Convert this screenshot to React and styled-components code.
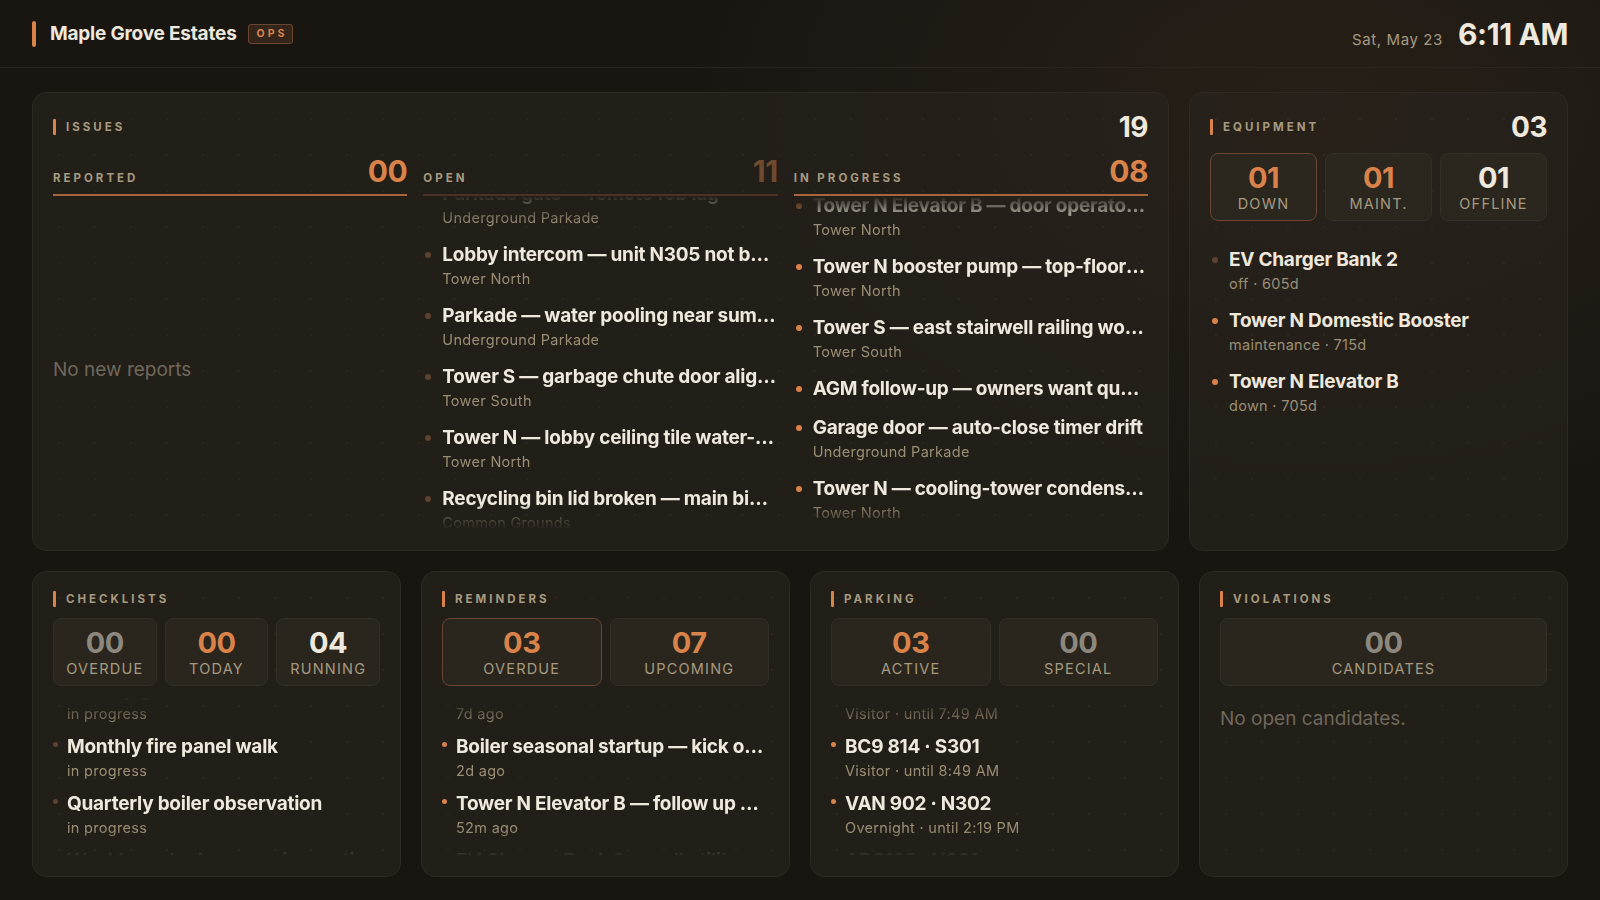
import React, { useLayoutEffect, useRef } from 'react';
import styled, { createGlobalStyle } from 'styled-components';

const C = {
  bg: '#191612',
  panel: 'rgba(40, 36, 29, 0.62)',
  border: '#2e2921',
  box: 'rgba(46, 41, 33, 0.7)',
  boxBorder: '#362f26',
  orange: '#d9834b',
  orangeDim: '#6a4730',
  text: '#efe8dc',
  label: '#a69a80',
  sub: '#9a8e75',
  dim: '#6f685c',
  gray: '#8d887e',
};

const GlobalStyle = createGlobalStyle`
  html, body, #root { height: 100%; }
  body {
    margin: 0;
    background: ${C.bg};
    color: ${C.text};
    font-family: Inter, "Noto Sans", sans-serif;
    -webkit-font-smoothing: antialiased;
  }
`;

const Page = styled.div`
  height: 100vh;
  display: flex;
  flex-direction: column;
  background:
    radial-gradient(ellipse 900px 600px at 82% 12%, rgba(74, 56, 38, 0.28), transparent 70%),
    ${C.bg};
`;

const Header = styled.header`
  flex: 0 0 68px;
  box-sizing: border-box;
  display: flex;
  align-items: center;
  justify-content: space-between;
  padding: 0 32px;
  border-bottom: 1px solid #2a251e;
`;

const Brand = styled.div`
  display: flex;
  align-items: center;
  gap: 14px;
`;

const BrandBar = styled.span`
  width: 4px;
  height: 26px;
  border-radius: 2px;
  background: ${C.orange};
`;

const BrandName = styled.h1`
  margin: 0;
  font-size: 19px;
  font-weight: 700;
  letter-spacing: -0.2px;
  color: ${C.text};
`;

const Badge = styled.span`
  margin-left: -3px;
  padding: 2px 5px 2px 8px;
  font-size: 10.5px;
  line-height: 14px;
  font-weight: 700;
  letter-spacing: 3px;
  color: ${C.orange};
  background: #34251a;
  border: 1px solid ${C.orangeDim};
  border-radius: 3px;
`;

const Clock = styled.div`
  display: flex;
  align-items: baseline;
  gap: 15px;
`;

const DateText = styled.span`
  font-size: 15px;
  letter-spacing: 0.6px;
  color: ${C.label};
`;

const TimeText = styled.span`
  font-size: 30px;
  font-weight: 700;
  letter-spacing: -0.4px;
  color: ${C.text};
`;

const Main = styled.main`
  flex: 1;
  min-height: 0;
  display: grid;
  grid-template-rows: 3fr 2fr;
  gap: 20px;
  padding: 24px 32px 23px;
`;

const TopRow = styled.div`
  display: grid;
  grid-template-columns: 3fr 1fr;
  gap: 20px;
  min-height: 0;
`;

const BottomRow = styled.div`
  display: grid;
  grid-template-columns: repeat(4, 1fr);
  gap: 20px;
  min-height: 0;
`;

const Panel = styled.section`
  display: flex;
  flex-direction: column;
  min-height: 0;
  padding: 20px;
  border-radius: 14px;
  border: 1px solid ${C.border};
  background-color: ${C.panel};
  background-image: radial-gradient(rgba(255, 240, 220, 0.035) 1px, transparent 1.4px);
  background-size: 36px 36px;
  background-position: 8px 8px;
  overflow: hidden;
`;

const PanelHead = styled.div`
  display: flex;
  align-items: center;
  justify-content: space-between;
  height: ${(p) => (p.$tall ? 28 : 14)}px;
  margin-bottom: 12px;
`;

const PanelLabel = styled.div`
  display: flex;
  align-items: center;
  gap: 10px;
  font-size: 11.5px;
  font-weight: 700;
  letter-spacing: 3px;
  color: ${C.label};

  &::before {
    content: '';
    width: 3px;
    height: 16px;
    border-radius: 1px;
    background: ${C.orange};
  }
`;

const PanelTotal = styled.span`
  font-size: 28px;
  line-height: 28px;
  font-weight: 700;
  letter-spacing: -0.5px;
  color: ${C.text};
`;

const IssueColumns = styled.div`
  flex: 1;
  min-height: 0;
  display: grid;
  grid-template-columns: repeat(3, 1fr);
  gap: 16px;
`;

const Column = styled.div`
  display: flex;
  flex-direction: column;
  min-height: 0;
`;

const ColumnHead = styled.div`
  display: flex;
  align-items: baseline;
  justify-content: space-between;
  padding-bottom: 5px;
  border-bottom: 2px solid ${(p) => (p.$active ? '#a8643a' : '#4a3225')};
`;

const ColumnLabel = styled.span`
  font-size: 11.5px;
  font-weight: 700;
  letter-spacing: 3px;
  color: ${C.label};
`;

const ColumnCount = styled.span`
  font-size: 30px;
  line-height: 36px;
  font-weight: 700;
  letter-spacing: -0.5px;
  color: ${(p) => p.$color};
`;

const ListViewport = styled.div`
  flex: 1;
  min-height: 0;
  margin-top: ${(p) => p.$top || 0}px;
  overflow: hidden;
  mask-image: ${(p) =>
    p.$plain
      ? 'none'
      : 'linear-gradient(to bottom, transparent 0, #000 28px, #000 calc(100% - 26px), transparent 100%)'};
`;

const ItemList = styled.ul`
  list-style: none;
  margin: 0;
  padding: 0 0 40px ${(p) => (p.$compact ? 0 : 2)}px;
  display: flex;
  flex-direction: column;
  gap: ${(p) => (p.$compact ? 9 : 13)}px;
`;

const Item = styled.li`
  display: grid;
  grid-template-columns: ${(p) => (p.$compact ? '5px' : '6px')} minmax(0, 1fr);
  column-gap: ${(p) => (p.$compact ? 9 : 11)}px;
`;

const Bullet = styled.span`
  width: 100%;
  aspect-ratio: 1;
  margin-top: ${(p) => (p.$compact ? 8 : 10)}px;
  border-radius: 50%;
  background: ${(p) => (p.$hot ? C.orange : '#5e4230')};
`;

const ItemBody = styled.div`
  min-width: 0;
`;

const ItemTitle = styled.div`
  font-size: 19px;
  line-height: 26px;
  font-weight: 700;
  letter-spacing: -0.25px;
  color: ${C.text};
  white-space: nowrap;
  overflow: hidden;
  text-overflow: ellipsis;
`;

const ItemSub = styled.div`
  font-size: 14.5px;
  line-height: 22px;
  letter-spacing: 0.3px;
  color: ${C.sub};
  white-space: nowrap;
  overflow: hidden;
  text-overflow: ellipsis;
`;

const EmptyArea = styled.div`
  flex: 1;
  display: flex;
  align-items: center;
  padding-top: 12px;
`;

const EmptyNote = styled.p`
  margin: ${(p) => (p.$top ? `${p.$top}px 0 0` : 0)};
  font-size: 19px;
  color: ${C.dim};
`;

const StatRow = styled.div`
  display: grid;
  grid-template-columns: repeat(${(p) => p.$count}, 1fr);
  gap: 8px;
`;

const StatBox = styled.div`
  height: 68px;
  box-sizing: border-box;
  display: flex;
  flex-direction: column;
  align-items: center;
  justify-content: center;
  padding-top: 2px;
  border-radius: 8px;
  background: ${C.box};
  border: 1px solid ${(p) => (p.$active ? C.orangeDim : C.boxBorder)};
`;

const StatNum = styled.span`
  font-size: 29px;
  line-height: 32px;
  font-weight: 700;
  letter-spacing: -0.5px;
  color: ${(p) => p.$color};
`;

const StatLabel = styled.span`
  font-size: 14.5px;
  line-height: 20px;
  letter-spacing: 1.2px;
  text-transform: uppercase;
  color: ${C.label};
`;

function ScrollList({ offset = 0, top, items, hot, plain, compact }) {
  const ref = useRef(null);
  useLayoutEffect(() => {
    if (ref.current) ref.current.scrollTop = offset;
  }, [offset]);
  return (
    <ListViewport ref={ref} $top={top} $plain={plain}>
      <ItemList $compact={compact}>
        {items.map((it, i) => (
          <Item key={i} $compact={compact}>
            <Bullet $hot={it.hot ?? hot} $compact={compact} />
            <ItemBody>
              <ItemTitle>{it.title}</ItemTitle>
              {it.sub && <ItemSub>{it.sub}</ItemSub>}
            </ItemBody>
          </Item>
        ))}
      </ItemList>
    </ListViewport>
  );
}

function Stats({ stats }) {
  return (
    <StatRow $count={stats.length}>
      {stats.map((s) => (
        <StatBox key={s.label} $active={s.active}>
          <StatNum $color={s.color}>{s.value}</StatNum>
          <StatLabel>{s.label}</StatLabel>
        </StatBox>
      ))}
    </StatRow>
  );
}

const openIssues = [
  { title: 'Lobby door closer — slams shut', sub: 'Tower South' },
  { title: 'Parkade gate — remote fob lag', sub: 'Underground Parkade' },
  { title: 'Lobby intercom — unit N305 not buzzing', sub: 'Tower North' },
  { title: 'Parkade — water pooling near sump pit', sub: 'Underground Parkade' },
  { title: 'Tower S — garbage chute door alignment', sub: 'Tower South' },
  { title: 'Tower N — lobby ceiling tile water-stained', sub: 'Tower North' },
  { title: 'Recycling bin lid broken — main bin room', sub: 'Common Grounds' },
  { title: 'Tower S — hallway light flicker, 7th floor', sub: 'Tower South' },
  { title: 'Gym treadmill belt slipping', sub: 'Amenity Level' },
  { title: 'Visitor parking sign faded', sub: 'Underground Parkade' },
  { title: 'Tower N — mailroom lock sticking', sub: 'Tower North' },
];

const progressIssues = [
  { title: 'Tower S — boiler room exhaust fan noisy', sub: 'Tower South' },
  { title: 'Roof access hatch — seal worn', sub: 'Tower North' },
  { title: 'Tower N Elevator B — door operator fault', sub: 'Tower North' },
  { title: 'Tower N booster pump — top-floor pressure low', sub: 'Tower North' },
  { title: 'Tower S — east stairwell railing wobbly', sub: 'Tower South' },
  { title: 'AGM follow-up — owners want quotes on paving' },
  { title: 'Garage door — auto-close timer drift', sub: 'Underground Parkade' },
  { title: 'Tower N — cooling-tower condensate leak', sub: 'Tower North' },
];

const equipment = [
  { title: 'EV Charger Bank 2', sub: 'off · 605d', hot: false },
  { title: 'Tower N Domestic Booster', sub: 'maintenance · 715d', hot: true },
  { title: 'Tower N Elevator B', sub: 'down · 705d', hot: true },
];

const checklists = [
  { title: 'Weekly generator test run', sub: 'in progress' },
  { title: 'Monthly fire panel walk', sub: 'in progress' },
  { title: 'Quarterly boiler observation', sub: 'in progress' },
  { title: 'Weekly parkade sweep inspection', sub: 'in progress' },
];

const reminders = [
  { title: 'Insurance renewal — send unit list', sub: '7d ago' },
  { title: 'Boiler seasonal startup — kick off with contractor', sub: '2d ago' },
  { title: 'Tower N Elevator B — follow up with technician', sub: '52m ago' },
  { title: 'EV Charger Bank 2 — call utility about outage', sub: '3h ago' },
];

const parking = [
  { title: 'ABC 123 · S204', sub: 'Visitor · until 7:49 AM' },
  { title: 'BC9 814 · S301', sub: 'Visitor · until 8:49 AM' },
  { title: 'VAN 902 · N302', sub: 'Overnight · until 2:19 PM' },
  { title: 'ABC123 · N301', sub: 'Visitor · until 3:05 PM' },
];

export default function App() {
  return (
    <Page>
      <GlobalStyle />
      <Header>
        <Brand>
          <BrandBar />
          <BrandName>Maple Grove Estates</BrandName>
          <Badge>OPS</Badge>
        </Brand>
        <Clock>
          <DateText>Sat, May 23</DateText>
          <TimeText>6:11 AM</TimeText>
        </Clock>
      </Header>

      <Main>
        <TopRow>
          <Panel>
            <PanelHead $tall>
              <PanelLabel>ISSUES</PanelLabel>
              <PanelTotal>19</PanelTotal>
            </PanelHead>
            <IssueColumns>
              <Column>
                <ColumnHead $active>
                  <ColumnLabel>REPORTED</ColumnLabel>
                  <ColumnCount $color={C.orange}>00</ColumnCount>
                </ColumnHead>
                <EmptyArea>
                  <EmptyNote>No new reports</EmptyNote>
                </EmptyArea>
              </Column>
              <Column>
                <ColumnHead>
                  <ColumnLabel>OPEN</ColumnLabel>
                  <ColumnCount $color="#6e4a30">11</ColumnCount>
                </ColumnHead>
                <ScrollList items={openIssues} offset={76} hot={false} />
              </Column>
              <Column>
                <ColumnHead $active>
                  <ColumnLabel>IN PROGRESS</ColumnLabel>
                  <ColumnCount $color={C.orange}>08</ColumnCount>
                </ColumnHead>
                <ScrollList items={progressIssues} offset={125} hot />
              </Column>
            </IssueColumns>
          </Panel>

          <Panel>
            <PanelHead $tall>
              <PanelLabel>EQUIPMENT</PanelLabel>
              <PanelTotal>03</PanelTotal>
            </PanelHead>
            <Stats
              stats={[
                { value: '01', label: 'Down', color: C.orange, active: true },
                { value: '01', label: 'Maint.', color: C.orange },
                { value: '01', label: 'Offline', color: C.text },
              ]}
            />
            <ScrollList items={equipment} top={26} plain />
          </Panel>
        </TopRow>

        <BottomRow>
          <Panel>
            <PanelHead>
              <PanelLabel>CHECKLISTS</PanelLabel>
            </PanelHead>
            <Stats
              stats={[
                { value: '00', label: 'Overdue', color: C.gray },
                { value: '00', label: 'Today', color: C.orange },
                { value: '04', label: 'Running', color: C.text },
              ]}
            />
            <ScrollList items={checklists} top={12} offset={21} compact hot={false} />
          </Panel>

          <Panel>
            <PanelHead>
              <PanelLabel>REMINDERS</PanelLabel>
            </PanelHead>
            <Stats
              stats={[
                { value: '03', label: 'Overdue', color: C.orange, active: true },
                { value: '07', label: 'Upcoming', color: C.orange },
              ]}
            />
            <ScrollList items={reminders} top={12} offset={21} compact hot />
          </Panel>

          <Panel>
            <PanelHead>
              <PanelLabel>PARKING</PanelLabel>
            </PanelHead>
            <Stats
              stats={[
                { value: '03', label: 'Active', color: C.orange },
                { value: '00', label: 'Special', color: C.gray },
              ]}
            />
            <ScrollList items={parking} top={12} offset={21} compact hot />
          </Panel>

          <Panel>
            <PanelHead>
              <PanelLabel>VIOLATIONS</PanelLabel>
            </PanelHead>
            <Stats stats={[{ value: '00', label: 'Candidates', color: C.gray }]} />
            <EmptyNote $top={21}>No open candidates.</EmptyNote>
          </Panel>
        </BottomRow>
      </Main>
    </Page>
  );
}
